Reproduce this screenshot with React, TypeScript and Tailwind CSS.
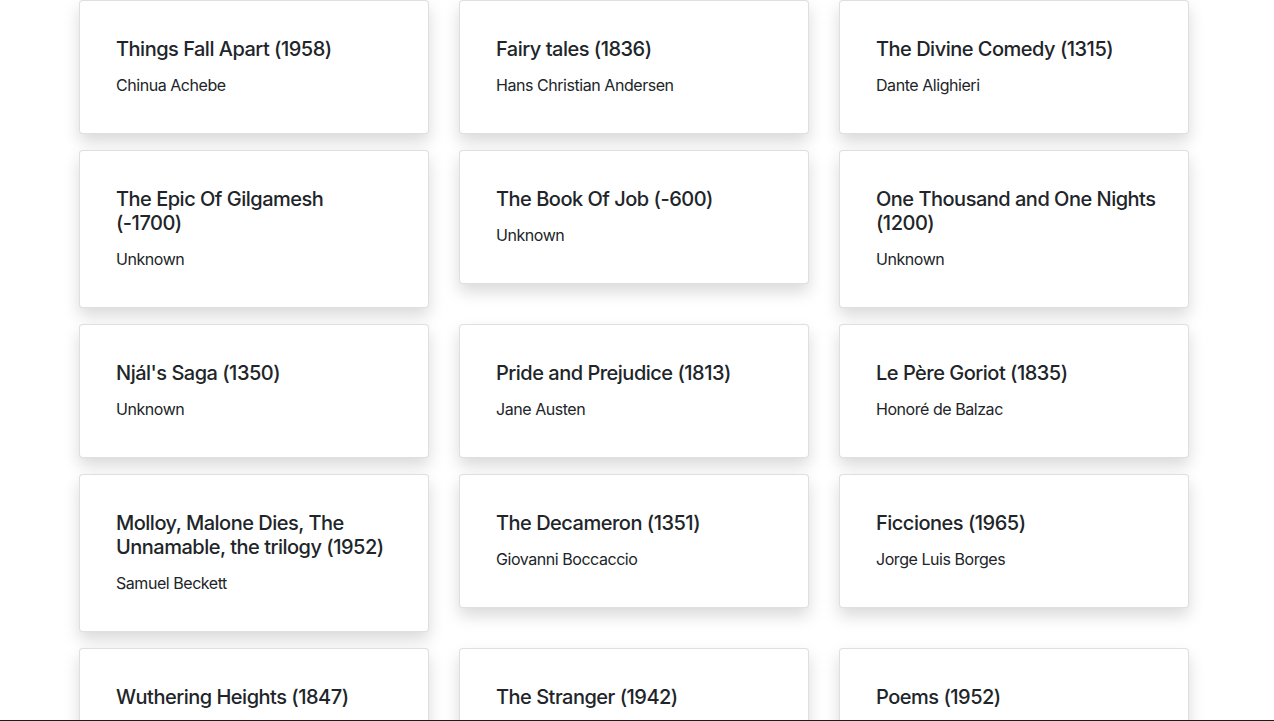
import React from "react";

type Book = { title: string; author: string };

// line breaks follow the original card layout
const books: Book[] = [
  { title: "Things Fall Apart (1958)", author: "Chinua Achebe" },
  { title: "Fairy tales (1836)", author: "Hans Christian Andersen" },
  { title: "The Divine Comedy (1315)", author: "Dante Alighieri" },
  { title: "The Epic Of Gilgamesh\n(-1700)", author: "Unknown" },
  { title: "The Book Of Job (-600)", author: "Unknown" },
  { title: "One Thousand and One Nights\n(1200)", author: "Unknown" },
  { title: "Njál's Saga (1350)", author: "Unknown" },
  { title: "Pride and Prejudice (1813)", author: "Jane Austen" },
  { title: "Le Père Goriot (1835)", author: "Honoré de Balzac" },
  { title: "Molloy, Malone Dies, The\nUnnamable, the trilogy (1952)", author: "Samuel Beckett" },
  { title: "The Decameron (1351)", author: "Giovanni Boccaccio" },
  { title: "Ficciones (1965)", author: "Jorge Luis Borges" },
  { title: "Wuthering Heights (1847)", author: "Emily Brontë" },
  { title: "The Stranger (1942)", author: "Albert Camus" },
  { title: "Poems (1952)", author: "Paul Celan" },
];

function BookCard({ book }: { book: Book }) {
  return (
    <div className="rounded border border-black/[0.125] bg-white py-[36px] pl-[36px] pr-[30px] shadow-[0_8px_16px_rgba(0,0,0,0.15)]">
      <h5 className="whitespace-pre-line text-[20px] font-medium leading-[24px] tracking-[-0.5px]">
        {book.title}
      </h5>
      <p className="mt-3 text-[16px] leading-[24px] tracking-[-0.45px]">{book.author}</p>
    </div>
  );
}

export default function App() {
  return (
    <div className="min-h-screen bg-white font-['Inter','Helvetica_Neue',Arial,sans-serif] text-[#212529]">
      <div className="grid grid-cols-[repeat(3,350px)] items-start gap-x-[30px] gap-y-4 pl-[79px]">
        {books.map((book) => (
          <BookCard key={book.title} book={book} />
        ))}
      </div>
      {/* window edge */}
      <div className="fixed bottom-0 left-0 h-px w-full bg-[#1c1c1c]" />
    </div>
  );
}
